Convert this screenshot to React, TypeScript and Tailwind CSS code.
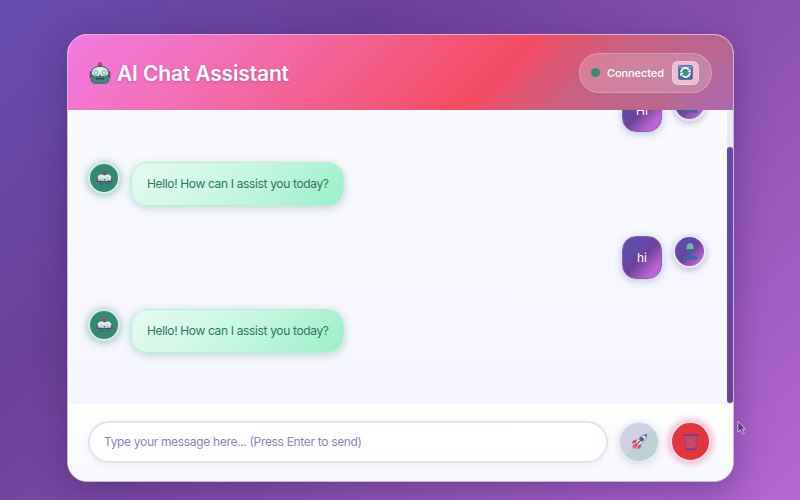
import React from "react";

function Robot({ className, small = false }: { className: string; small?: boolean }) {
  if (small) {
    return (
      <svg viewBox="0 0 16 16" className={className}>
        <path d="M7.200 2.500h1.600V5H7.200z" fill="#8b2c6c" />
        <circle cx="8" cy="2" r="1.500" fill="#cf3058" />
        <path d="M1.400 8.600c0-2.800 1.300-4.300 3.500-4.400 1.200 0 2.200.3 3.100 1 .9-.7 1.900-1 3.100-1 2.200.1 3.500 1.600 3.500 4.400v1.600H1.400z" fill="#dcf3ec" />
        <path d="M.5 7.800h1.700v3.400H.5zM13.800 7.800h1.700v3.400h-1.700z" fill="#8b3a80" />
        <path d="M.8 8h1v1.400h-1zM14.200 8h1v1.400h-1zM7.200 8.200h1.600v1.600H7.200z" fill="#cf3560" />
        <circle cx="5" cy="8" r="1.500" fill="#8cc7ba" />
        <circle cx="11" cy="8" r="1.500" fill="#8cc7ba" />
        <circle cx="5" cy="8" r=".8" fill="#fff" />
        <circle cx="11" cy="8" r=".8" fill="#fff" />
        <path d="M2.200 10.200h3.400v1.200H2.200zM10.400 10.200h3.400v1.200h-3.400zM6.700 10.600h2.600v1H6.700zM5 12.200h1.100v1.600H5zM9.600 11.900h1.100v1.300H9.600zM3.300 12h1v1h-1zM12.200 12h1v1h-1z" fill="#4b3a86" />
      </svg>
    );
  }
  return (
    <svg viewBox="0 0 22 22" className={className}>
      <path d="M8.200 3.400h5.600v2.400H8.200z" fill="#4b3f84" />
      <circle cx="11" cy="2.200" r="2.100" fill="#d8375c" />
      <path d="M.7 9.500h2.600v6.500H.7zM18.700 9.500h2.600v6.500h-2.600z" fill="#8d3472" />
      <path d="M.9 10h1.400v3.200H.9zM19.700 10h1.400v3.200h-1.400z" fill="#d8375c" />
      <path d="M2.200 11.600C2.200 6.800 5.600 4.400 11 4.400s8.800 2.400 8.800 7.200v6.200c0 2.300-1.300 3.500-3.400 3.500H5.600c-2.100 0-3.400-1.200-3.400-3.500z" fill="#37916f" stroke="#43537c" strokeWidth=".8" />
      <path d="M2.800 12C2.800 7.200 5.800 4.900 11 4.900s8.200 2.300 8.200 7.100c-1.400 1.400-4.200 1.900-8.200 1.900S4.200 13.400 2.800 12z" fill="#d6f1ea" />
      <circle cx="6.900" cy="10.500" r="1.900" fill="#f8fffd" stroke="#4a9c8a" strokeWidth=".9" />
      <circle cx="15.100" cy="10.500" r="1.900" fill="#f8fffd" stroke="#4a9c8a" strokeWidth=".9" />
      <path d="M9.700 14.200 11 11.600l1.300 2.600z" fill="#d8375c" />
      <path d="M7 15.800h8v1.600H7z" fill="#43377a" />
    </svg>
  );
}

function Person() {
  return (
    <svg viewBox="0 0 16 17" className="h-[17px] w-4">
      <path d="M4.500 4.500C4.500 1.800 5.600.3 8 .3s3.500 1.500 3.500 4.200V6.400h-7z" fill="#6dbb9f" />
      <path d="M4.500 6.200h7c0 2-.8 3.400-2 4.300v1.400c3 .4 6 1.600 6.300 4.900H.2c.3-3.300 3.300-4.500 6.300-4.900v-1.400c-1.200-.9-2-2.300-2-4.300z" fill="#41649a" />
    </svg>
  );
}

function Refresh() {
  return (
    <svg viewBox="0 0 16 16" className="size-[15px]">
      <rect x=".5" y=".5" width="15" height="15" rx="2" fill="#3f6b9c" stroke="#5a5f9c" strokeWidth=".8" />
      <path d="M1 1.200h14v2H1z" fill="#76a4bd" />
      <circle cx="8" cy="8" r="3.400" fill="#3a8f83" />
      <g fill="none" stroke="#eafaf6" strokeWidth="1.900">
        <path d="M3.200 7.500A4.800 4.800 0 0 1 11.700 5" />
        <path d="M12.800 8.500A4.800 4.800 0 0 1 4.300 11" />
      </g>
      <path d="M13.600 3.800v4H9.800zM2.400 12.200v-4h3.800z" fill="#eafaf6" />
    </svg>
  );
}

function Rocket() {
  return (
    <svg viewBox="0 0 18 18" className="size-[17px]">
      <path d="M6 7 2.400 7.800.6 11l4.400-.6zM11 12l-.8 3.600-3.200 1.800.6-4.400z" fill="#e2486f" />
      <path d="M4 10.800.6 14.200l1.700-.1-.8 2.700 2.600-.9.300 1.200 3-3.400z" fill="#f0617c" />
      <path d="M4.700 11.300C6.200 6.500 10.600 2 17 1.200c-.6 6-4.900 10.200-10 12.200z" fill="#e9eef7" stroke="#77759f" strokeWidth=".7" />
      <path d="M13.200 2.200c1.200-.6 2.400-.9 3.800-1-.2 1.500-.6 2.700-1.200 3.900z" fill="#80739f" />
      <circle cx="11.200" cy="6.700" r="2" fill="#34768a" stroke="#5a407e" strokeWidth=".9" />
      <path d="m5 13 4.300-4.300" stroke="#b53c73" strokeWidth="1.500" />
    </svg>
  );
}

function Trash() {
  return (
    <svg viewBox="0 0 18 18" className="size-[18px]" fill="none" stroke="#75489a">
      <path d="M2.300 2.200h13.400l-1.900 14H4.200z" fill="#b8486f" strokeWidth=".7" />
      <path d="m4 5 8.500 10.500M7 4.400l7 8.200M3.800 9l5.400 6.500M14 5 5.500 15.500M11 4.400l-7 8.200M14.200 9l-5.400 6.500" stroke="#e2506a" strokeWidth=".7" />
      <path d="M1.200 1.900h15.600M4.200 16.200h9.600" stroke="#6b3d94" strokeWidth="1.500" />
    </svg>
  );
}

function BotMessage() {
  return (
    <div className="flex items-start gap-[11px]">
      <div className="flex size-8 shrink-0 items-center justify-center rounded-full border-2 border-[#d9eee9] bg-[#358b72] shadow-[0_1px_9px_rgba(20,120,90,0.5)]">
        <Robot small className="size-[17px]" />
      </div>
      <div className="flex h-11 w-[213px] items-center rounded-[16px] border border-[#b4f0d5] bg-linear-135 from-[#e5fbf0] via-[#c6f8e1] to-[#9aefc8] pl-[15px] text-[12px] whitespace-nowrap text-[#2c7863] shadow-[0_2px_9px_rgba(30,110,100,0.27)]">
        <svg className="h-5 w-[184px]">
          <text x="0" y="14" textLength="182" fill="currentColor">Hello! How can I assist you today?</text>
        </svg>
      </div>
    </div>
  );
}

function UserMessage({ text }: { text: string }) {
  return (
    <div className="flex h-[43px] items-start justify-end gap-[11px]">
      <div className="flex h-[43px] min-w-10 items-center justify-center rounded-[14px] border border-[#8f5cb4] bg-linear-135 from-[#614cac] from-30% via-[#6c4098] via-50% to-[#b966d2] to-80% text-[12px] text-white shadow-[0_2px_9px_rgba(80,90,170,0.35)]">
        {text}
      </div>
      <div className="-mt-px flex size-[33px] shrink-0 items-center justify-center rounded-full border-2 border-[#e8e5f4] bg-linear-135 from-[#614cac] from-30% via-[#6c4098] via-50% to-[#b966d2] to-85% shadow-[0_2px_7px_rgba(80,90,150,0.4)]">
        <Person />
      </div>
    </div>
  );
}

export default function App() {
  return (
    <main className="relative h-[500px] w-[800px] overflow-hidden bg-linear-135 from-[#674daf] via-[#6b4096] via-30% to-[#b567d0] px-[67px] pt-[34px] font-['Inter','Liberation_Sans',sans-serif]">
      <section className="flex h-[448px] w-[667px] flex-col overflow-hidden rounded-[20px] border border-[#d4b5d3] bg-[#f8f9ff] shadow-[0_8px_32px_rgba(45,25,90,0.4)]">
        <header className="flex h-[75px] shrink-0 items-center justify-between bg-[linear-gradient(135deg,#f27be2_0%,#f36bac_28%,#f54c61_63%,#ca6080_76%,#b76790_90%,#ac69b6_100%)] pr-[21px] pl-[21px]">
          <h1 className="flex items-center gap-[6px] text-[21px] font-semibold text-white [text-shadow:0_1px_3px_rgba(80,20,90,0.25)]">
            <Robot className="size-[22px]" />
            <svg className="h-7 w-[176px] overflow-visible">
              <text x="0" y="21.500" textLength="172" fill="currentColor">AI Chat Assistant</text>
            </svg>
          </h1>
          <div className="flex h-10 w-[133px] items-center rounded-full border border-white/20 bg-white/20 pl-[11px]">
            <span className="size-[9px] rounded-full bg-[#338f76]" />
            <svg className="ml-[7px] h-5 w-[60px] overflow-visible text-[11px] font-medium text-white">
              <text x="0" y="14" textLength="57" fill="currentColor">Connected</text>
            </svg>
            <button className="ml-[5px] flex h-6 w-[27px] items-center justify-center rounded-[6px] border border-white/20 bg-[#edbdd5]">
              <Refresh />
            </button>
          </div>
        </header>

        <div className="flex h-[293px] shrink-0 overflow-hidden bg-linear-to-b from-[#f9faff] to-[#f6f7fe]">
          <div className="-mt-[21px] flex flex-1 flex-col gap-[30px] pr-[21px] pl-5">
            <UserMessage text="Hi" />
            <BotMessage />
            <UserMessage text="hi" />
            <BotMessage />
          </div>
          <div className="w-[6px] bg-[#e8eaf6] pt-[37px]">
            <div className="h-[256px] rounded-full bg-linear-to-b from-[#604bac] to-[#6c4299]" />
          </div>
        </div>

        <footer className="flex flex-1 items-center border-t border-[#eff0fd] bg-linear-to-b from-white to-[#f7f8ff] pb-[2px] pl-5">
          <div className="flex h-[42px] w-[520px] items-center rounded-full border-2 border-[#dfe3ee] bg-white pl-[14px] text-[12px] text-[#9182b7] shadow-[0_2px_7px_rgba(40,50,90,0.06)]">
            <svg className="h-5 w-[262px]">
              <text x="0" y="14" textLength="258" fill="currentColor">Type your message here... (Press Enter to send)</text>
            </svg>
          </div>
          <button className="ml-[11px] flex size-10 items-center justify-center rounded-full border border-[#e4e6ef] bg-linear-135 from-[#cfd1e4] from-48% to-[#bed2d4] to-52% shadow-[0_2px_8px_rgba(40,50,90,0.18)]">
            <Rocket />
          </button>
          <button className="ml-[11px] flex size-[41px] items-center justify-center rounded-full border-2 border-[#f2d9e5] bg-[#e2363f] shadow-[0_0_6px_2px_rgba(233,70,120,0.4)]">
            <Trash />
          </button>
        </footer>
      </section>
      <svg viewBox="0 0 10 16" className="absolute top-[420px] left-[737px] h-[15px] w-[9px]">
        <path d="M1 1v12l2.600-2.500L6 15l2-1-2.300-4.300H9z" fill="#51347d" stroke="#dfc2e4" strokeWidth="1" />
      </svg>
    </main>
  );
}
